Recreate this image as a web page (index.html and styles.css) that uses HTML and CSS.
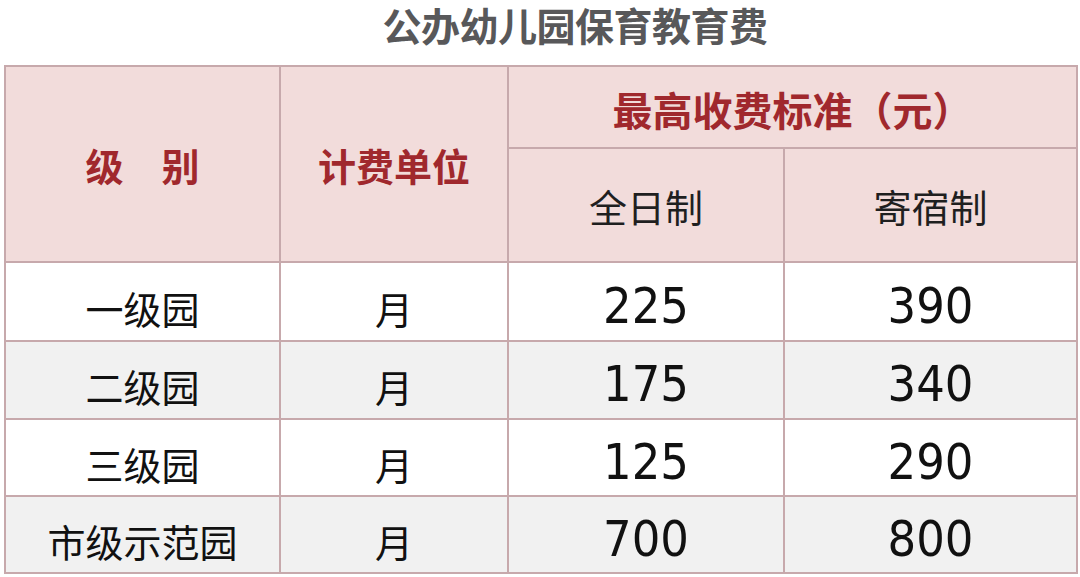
FILE: index.html
```html
<!DOCTYPE html>
<html lang="zh-CN">
<head>
<meta charset="utf-8">
<title>公办幼儿园保育教育费</title>
<link rel="stylesheet" href="styles.css">
</head>
<body>
<div class="page">
  <h1 class="title">公办幼儿园保育教育费</h1>
  <table class="fees">
    <colgroup>
      <col class="c1"><col class="c2"><col class="c3"><col class="c4">
    </colgroup>
    <thead>
      <tr class="h1">
        <th rowspan="2" class="head-main">级　别</th>
        <th rowspan="2" class="head-main">计费单位</th>
        <th colspan="2" class="head-main top">最高收费标准（元）</th>
      </tr>
      <tr class="h2">
        <th class="head-sub">全日制</th>
        <th class="head-sub">寄宿制</th>
      </tr>
    </thead>
    <tbody>
      <tr class="r1"><td>一级园</td><td>月</td><td class="num">225</td><td class="num">390</td></tr>
      <tr class="r2 alt"><td>二级园</td><td>月</td><td class="num">175</td><td class="num">340</td></tr>
      <tr class="r3"><td>三级园</td><td>月</td><td class="num">125</td><td class="num">290</td></tr>
      <tr class="r4 alt"><td>市级示范园</td><td>月</td><td class="num">700</td><td class="num">800</td></tr>
    </tbody>
  </table>
</div>
</body>
</html>
```

FILE: styles.css
```css
html, body {
  margin: 0;
  padding: 0;
  background: #ffffff;
}

body {
  font-family: "Noto Sans CJK SC", "Noto Sans", sans-serif;
  color: #1a1a1a;
}

.page {
  width: 1080px;
  height: 577px;
  overflow: hidden;
}

.title {
  margin: 0;
  height: 65px;
  padding-left: 70px;
  font-size: 39px;
  line-height: 48px;
  font-weight: 700;
  color: #58585a;
  text-align: center;
  letter-spacing: -0.5px;
}

.fees {
  margin-left: 4px;
  width: 1072px;
  border-collapse: collapse;
  table-layout: fixed;
  border: 2px solid #b3a3a5;
}

.c1 { width: 275px; }
.c2 { width: 228px; }
.c3 { width: 276px; }
.c4 { width: 293px; }

.fees th,
.fees td {
  border: 2px solid #c7a9ac;
  text-align: center;
  padding: 0;
}

.fees thead th {
  background: #f2dcdb;
}

.head-main {
  font-size: 38px;
  font-weight: 700;
  color: #a0282d;
  letter-spacing: 0;
}

.h1 { height: 82px; }
.h2 { height: 114px; }

.fees th.top {
  padding-top: 4px;
  font-size: 40px;
}

.head-sub {
  font-size: 38px;
  font-weight: 400;
  color: #1f1f1f;
}

.fees tbody td {
  font-size: 38px;
  padding-top: 12px;
  line-height: 50px;
  color: #111;
  background: #ffffff;
}

.fees tbody tr.alt td {
  background: #f1f1f1;
}

.r1 { height: 79px; }
.r2 { height: 78px; }
.r3 { height: 77px; }
.r4 { height: 77px; }

.fees td.num {
  font-family: "Liberation Sans Narrow", "DejaVu Sans Condensed", "Liberation Sans", sans-serif;
  font-size: 50px;
  padding-top: 8px;
}
```
